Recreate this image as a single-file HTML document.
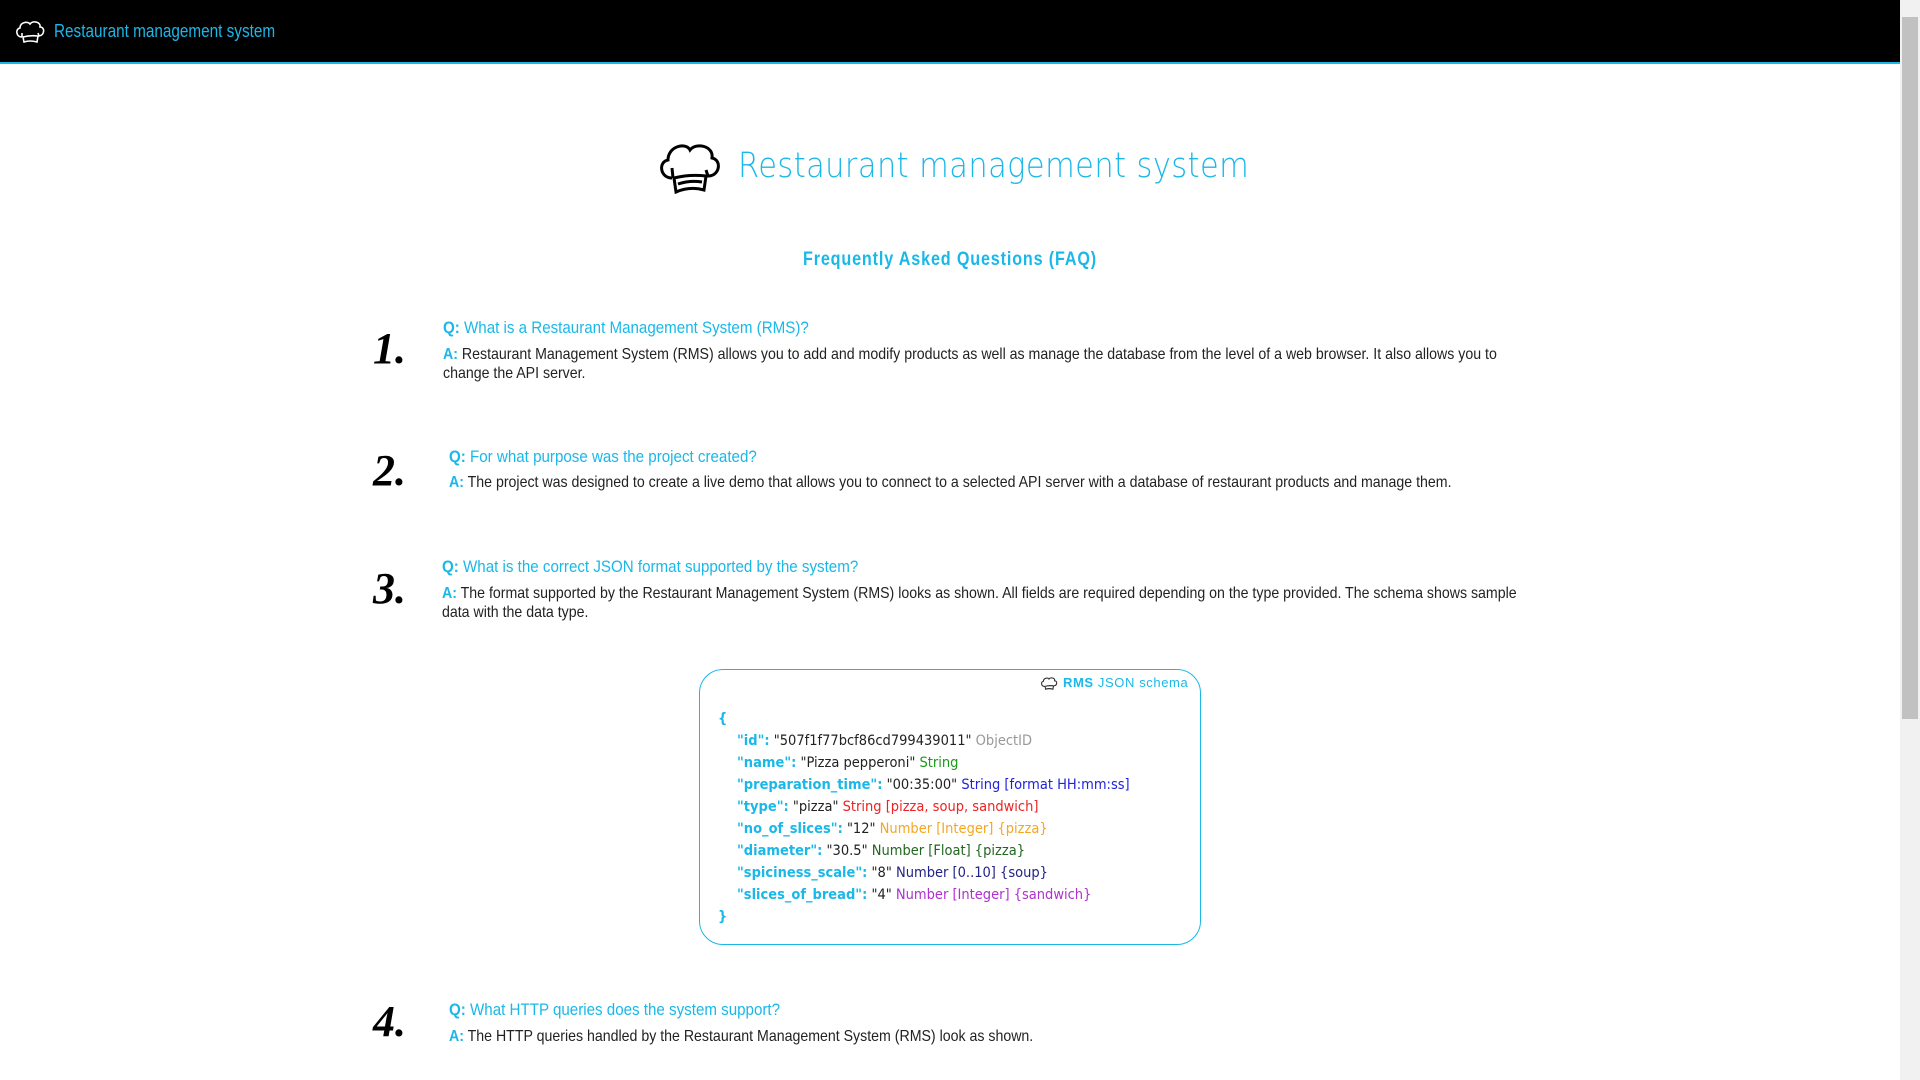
<!DOCTYPE html>
<html><head><meta charset="utf-8"><style>
*{margin:0;padding:0;box-sizing:border-box}
html,body{width:1920px;height:1080px;overflow:hidden;background:#fff;font-family:"Liberation Sans",sans-serif}
.nav{position:absolute;left:0;top:0;width:1900px;height:64px;background:#000;border-bottom:2px solid #1ab8e8}
.nav .t{position:absolute;left:54px;top:21px;color:#1ab8e8;font-size:18px;transform:scaleX(0.85);transform-origin:left}
.sb{position:absolute;left:1900px;top:0;width:20px;height:1080px;background:#f1f1f1}
.sb .th{position:absolute;left:2px;top:17px;width:16px;height:702px;background:#c1c1c1}
.abs{position:absolute;white-space:nowrap}
.title{left:738px;top:146px;font-family:"DejaVu Sans",sans-serif;font-weight:200;font-size:35px;color:#1ab8e8;letter-spacing:0.5px;transform:scaleX(0.87);transform-origin:left}
.faq{left:0;width:1900px;text-align:center;top:249px;font-weight:bold;font-size:19px;color:#1ab8e8;letter-spacing:1px;transform:scaleX(0.85);transform-origin:950px 0}
.num{font-family:"Liberation Serif",serif;font-style:italic;font-weight:bold;font-size:44px;color:#000}
.q{font-size:17px;color:#1ab8e8;transform:scaleX(0.89);transform-origin:left}
.q b,.a b{color:#1ab8e8}
.a{font-size:16px;color:#222;line-height:19px;white-space:normal;width:1225px;transform:scaleX(0.885);transform-origin:left}
.box{position:absolute;left:699px;top:669px;width:502px;height:276px;border:1.5px solid #1ab8e8;border-radius:24px}
.mono{font-family:"DejaVu Sans Condensed","DejaVu Sans",sans-serif;font-size:14.5px;color:#222}
.k{color:#1ab8e8;font-weight:bold}
</style></head><body>
<div class="nav">
<svg style="position:absolute;left:14px;top:18px" width="32" height="26" viewBox="0 0 32 26"><path d="M8 19 C2 19 1 11 6 10 C6 4 14 3 16 6 C19 2 27 4 26 9 C31 9 31 17 25 18 L24 15 M8 19 L8 15" fill="none" stroke="#fff" stroke-width="1.6"/><path d="M9 19 Q16 17 24 18 L23 24 Q16 22 10 24 Z" fill="none" stroke="#fff" stroke-width="1.6"/></svg>
<div class="t">Restaurant management system</div>
</div>
<div class="sb"><div class="th"></div></div>

<svg style="position:absolute;left:656px;top:138px" width="66" height="56" viewBox="0 0 66 56"><path d="M16 40 C4 40 2 24 12 22 C12 8 30 4 34 12 C40 4 58 8 56 20 C66 22 64 38 52 38 L50 32" fill="none" stroke="#000" stroke-width="3"/><path d="M17 40 L16 30 M18 40 Q34 36 50 38 L48 52 Q34 48 20 54 Z" fill="none" stroke="#000" stroke-width="3"/><path d="M22 46 Q34 42 46 44" stroke="#000" stroke-width="3" fill="none"/></svg>
<div class="abs title">Restaurant management system</div>
<div class="abs faq">Frequently Asked Questions (FAQ)</div>

<div class="abs num" style="left:373px;top:323px">1.</div>
<div class="abs q" style="left:443px;top:318px"><b>Q:</b> What is a Restaurant Management System (RMS)?</div>
<div class="abs a" style="left:443px;top:345px"><b>A:</b> Restaurant Management System (RMS) allows you to add and modify products as well as manage the database from the level of a web browser. It also allows you to change the API server.</div>

<div class="abs num" style="left:373px;top:445px">2.</div>
<div class="abs q" style="left:449px;top:447px"><b>Q:</b> For what purpose was the project created?</div>
<div class="abs a" style="left:449px;top:473px"><b>A:</b> The project was designed to create a live demo that allows you to connect to a selected API server with a database of restaurant products and manage them.</div>

<div class="abs num" style="left:373px;top:563px">3.</div>
<div class="abs q" style="left:442px;top:557px"><b>Q:</b> What is the correct JSON format supported by the system?</div>
<div class="abs a" style="left:442px;top:584px"><b>A:</b> The format supported by the Restaurant Management System (RMS) looks as shown. All fields are required depending on the type provided. The schema shows sample data with the data type.</div>

<div class="box"></div>
<svg style="position:absolute;left:1040px;top:675px" width="18" height="16" viewBox="0 0 32 26"><path d="M8 19 C2 19 1 11 6 10 C6 4 14 3 16 6 C19 2 27 4 26 9 C31 9 31 17 25 18 M9 19 Q16 17 24 18 L23 24 Q16 22 10 24 Z" fill="none" stroke="#333" stroke-width="2"/></svg>
<div class="abs" style="left:1063px;top:675px;font-size:13px;color:#1ab8e8;letter-spacing:0.6px"><b>RMS</b> JSON schema</div>
<div class="abs mono" style="left:718px;top:708px;line-height:22px">
<div class="k">{</div>
<div style="padding-left:19px"><span class="k">"id":</span> "507f1f77bcf86cd799439011" <span style="color:#999">ObjectID</span></div>
<div style="padding-left:19px"><span class="k">"name":</span> "Pizza pepperoni" <span style="color:#1a9a1a">String</span></div>
<div style="padding-left:19px"><span class="k">"preparation_time":</span> "00:35:00" <span style="color:#2222dd">String [format HH:mm:ss]</span></div>
<div style="padding-left:19px"><span class="k">"type":</span> "pizza" <span style="color:#ee2222">String [pizza, soup, sandwich]</span></div>
<div style="padding-left:19px"><span class="k">"no_of_slices":</span> "12" <span style="color:#f5a623">Number [Integer] {pizza}</span></div>
<div style="padding-left:19px"><span class="k">"diameter":</span> "30.5" <span style="color:#226622">Number [Float] {pizza}</span></div>
<div style="padding-left:19px"><span class="k">"spiciness_scale":</span> "8" <span style="color:#222288">Number [0..10] {soup}</span></div>
<div style="padding-left:19px"><span class="k">"slices_of_bread":</span> "4" <span style="color:#b030d0">Number [Integer] {sandwich}</span></div>
<div class="k">}</div>
</div>

<div class="abs num" style="left:373px;top:996px">4.</div>
<div class="abs q" style="left:449px;top:1000px"><b>Q:</b> What HTTP queries does the system support?</div>
<div class="abs a" style="left:449px;top:1027px"><b>A:</b> The HTTP queries handled by the Restaurant Management System (RMS) look as shown.</div>
</body></html>
